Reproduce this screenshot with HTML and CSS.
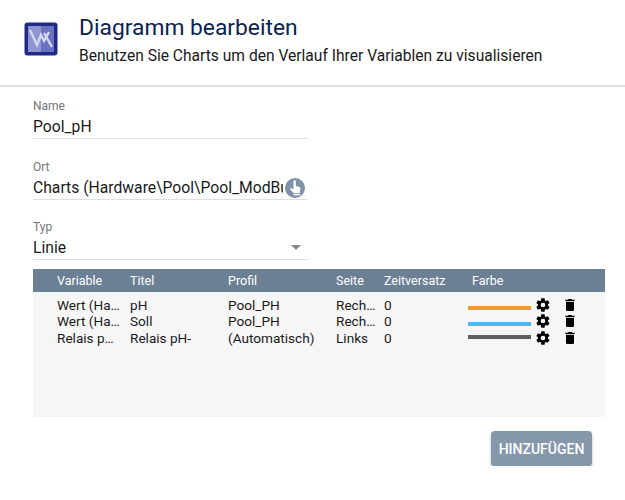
FILE: index.html
```html
<!DOCTYPE html>
<html lang="de">
<head>
    <meta charset="UTF-8">
    <title>Diagramm bearbeiten</title>
    <link rel="stylesheet" href="styles.css">
</head>
<body>

<header class="head">
    <svg class="logo" viewBox="0 0 34 34">
        <rect x="0.5" y="0.5" width="33" height="33" rx="3" fill="#1f2a86"/>
        <rect x="4" y="4" width="13" height="26" fill="#8d94d0"/>
        <rect x="17" y="4" width="13" height="26" fill="#6a72c0"/>
        <path d="M6 8 L13 23 L17 13 L20 19 L25 10 M20 11 L28 25" fill="none" stroke="#d5d8ee" stroke-width="2.4"/>
    </svg>
    <div>
        <h1>Diagramm bearbeiten</h1>
        <p>Benutzen Sie Charts um den Verlauf Ihrer Variablen zu visualisieren</p>
    </div>
</header>

<main class="content">
    <div class="field">
        <label>Name</label>
        <div class="value">Pool_pH</div>
    </div>
    <div class="field">
        <label>Ort</label>
        <div class="value">
            <span class="clip">Charts (Hardware\Pool\Pool_ModBus)</span>
            <svg class="pick" viewBox="0 0 20 20">
                <circle cx="10" cy="10" r="10" fill="#7f92a8"/>
                <path d="M8.500 3.500a1.200 1.200 0 0 1 2.400 0v4.500l3.400.9c.8.2 1.200.9 1.100 1.700l-.6 4.400H8.600L5 11l.9-1 2.600 1.500z" fill="#fff"/>
                <rect x="8.600" y="15.800" width="6.600" height="1.500" fill="#fff"/>
            </svg>
        </div>
    </div>
    <div class="field">
        <label>Typ</label>
        <div class="value">
            <span class="clip">Linie</span>
            <span class="arrow"></span>
        </div>
    </div>

    <table class="list">
        <thead>
            <tr>
                <th class="c-var">Variable</th>
                <th class="c-title">Titel</th>
                <th class="c-profile">Profil</th>
                <th class="c-side">Seite</th>
                <th class="c-offset">Zeitversatz</th>
                <th class="c-color">Farbe</th>
                <th class="c-edit"></th>
                <th></th>
            </tr>
        </thead>
        <tbody>
            <tr>
                <td>Wert (Ha…</td><td>pH</td><td>Pool_PH</td><td>Rech…</td><td>0</td>
                <td><span class="line orange"></span></td>
                <td><svg class="icon gear" viewBox="0 0 24 24"><use href="#gear"/></svg></td>
                <td><svg class="icon trash" viewBox="0 0 24 24"><use href="#trash"/></svg></td>
            </tr>
            <tr>
                <td>Wert (Ha…</td><td>Soll</td><td>Pool_PH</td><td>Rech…</td><td>0</td>
                <td><span class="line blue"></span></td>
                <td><svg class="icon gear" viewBox="0 0 24 24"><use href="#gear"/></svg></td>
                <td><svg class="icon trash" viewBox="0 0 24 24"><use href="#trash"/></svg></td>
            </tr>
            <tr>
                <td>Relais p…</td><td>Relais pH-</td><td>(Automatisch)</td><td>Links</td><td>0</td>
                <td><span class="line grey"></span></td>
                <td><svg class="icon gear" viewBox="0 0 24 24"><use href="#gear"/></svg></td>
                <td><svg class="icon trash" viewBox="0 0 24 24"><use href="#trash"/></svg></td>
            </tr>
        </tbody>
    </table>

    <div class="actions">
        <button type="button">HINZUFÜGEN</button>
    </div>
</main>

<svg class="defs" width="0" height="0">
    <symbol id="gear" viewBox="0 0 24 24">
        <path fill-rule="evenodd" d="M19.400 13c.1-.3.1-.7.1-1s0-.7-.1-1l2.100-1.600c.2-.2.2-.4.1-.6l-2-3.500c-.1-.2-.4-.3-.6-.2l-2.500 1c-.5-.4-1.100-.7-1.700-1L14.400 2.400c0-.2-.2-.4-.5-.4h-4c-.2 0-.4.2-.5.4L9 5.100c-.6.2-1.200.6-1.700 1l-2.500-1c-.2-.1-.5 0-.6.2l-2 3.500c-.1.2-.1.5.1.6L4.400 11c0 .3-.1.700-.1 1s0 .7.1 1l-2.100 1.600c-.2.2-.2.4-.1.6l2 3.500c.1.2.4.3.6.2l2.500-1c.5.4 1.100.7 1.700 1l.4 2.700c0 .2.2.4.5.4h4c.2 0 .4-.2.5-.4l.4-2.700c.6-.2 1.200-.6 1.700-1l2.500 1c.2.1.5 0 .6-.2l2-3.500c.1-.2.1-.5-.1-.6zM12 15.500a3.500 3.500 0 1 1 0-7 3.500 3.500 0 0 1 0 7z"/>
    </symbol>
    <symbol id="trash" viewBox="0 0 24 24">
        <path d="M6 19c0 1.100.9 2 2 2h8c1.100 0 2-.9 2-2V7H6zM19 4h-3.500l-1-1h-5l-1 1H5v2h14z"/>
    </symbol>
</svg>

</body>
</html>
```

FILE: styles.css
```css
body {
    margin: 0;
    font-family: Roboto, Arial, sans-serif;
    font-size: 14px;
    color: #1a1a1a;
    background: white;
}
.head {
    display: flex;
    align-items: flex-start;
    gap: 21px;
    height: 85px;
    padding: 0 24px;
    border-bottom: 2px solid #dddddd;
}
.logo {
    width: 34px;
    height: 34px;
    margin-top: 22px;
    flex-shrink: 0;
}
h1 {
    margin: 14px 0 0;
    font-size: 22.8px;
    line-height: 28px;
    font-weight: 400;
    color: #0b2350;
}
.head p {
    margin: 4px 0 0;
    font-size: 15.6px;
    line-height: 20px;
}
.content {
    padding: 0 20px 0 33px;
}
.field {
    width: 274px;
    height: 60.5px;
    box-sizing: border-box;
    padding-top: 12px;
}
.field label {
    display: block;
    font-size: 12px;
    line-height: 14px;
    color: #757575;
}
.value {
    display: flex;
    align-items: center;
    height: 23px;
    padding-top: 2px;
    border-bottom: 1px solid #dfdfdf;
    font-size: 15.7px;
}
.clip {
    flex: 1;
    white-space: nowrap;
    overflow: hidden;
}
.pick {
    width: 20px;
    height: 20px;
    margin: 1px 2px 0;
    flex-shrink: 0;
}
.arrow {
    width: 0;
    height: 0;
    margin-right: 6px;
    border-left: 5px solid transparent;
    border-right: 5px solid transparent;
    border-top: 5px solid #8a8a8a;
}
.list {
    width: 572px;
    height: 148px;
    margin-top: 0.5px;
    border-collapse: collapse;
    table-layout: fixed;
    background: #f6f6f6;
}
.list th {
    height: 23px;
    padding: 0;
    background: #6b7f95;
    color: white;
    font-size: 12.5px;
    font-weight: 400;
    text-align: left;
    white-space: nowrap;
}
.list tbody tr {
    height: 16.5px;
}
.list tbody tr:last-child {
    height: auto;
    vertical-align: top;
}
.list td {
    padding: 0;
    font-size: 13.6px;
    line-height: 16px;
    white-space: nowrap;
}
.list tbody tr:first-child td {
    padding-top: 5px;
}
.list .c-var { width: 73px; padding-left: 24px; }
.c-title { width: 98px; }
.c-profile { width: 108px; }
.c-side { width: 48px; }
.c-offset { width: 84px; }
.list .c-color { width: 64px; padding-left: 4px; }
.c-edit { width: 28px; }
.list td:first-child {
    padding-left: 24px;
}
.line {
    display: block;
    width: 63px;
    height: 4px;
    margin-top: 5px;
}
.orange { background: #f59a2f; }
.blue { background: #4cb8f5; }
.grey { background: #5f5f5f; }
.icon {
    display: block;
    width: 16px;
    height: 16px;
}
.gear { margin-left: -1px; }
.trash { margin-left: -2px; }
.actions {
    display: flex;
    justify-content: flex-end;
    width: 559px;
    margin-top: 14px;
}
button {
    width: 101px;
    height: 35px;
    padding: 0;
    border: none;
    border-radius: 4px;
    background: #8497ab;
    color: white;
    font-family: Roboto, Arial, sans-serif;
    font-size: 14px;
    font-weight: 500;
    box-shadow: 0 2px 3px rgba(0, 0, 0, 0.3);
}
.defs {
    position: absolute;
}
```
